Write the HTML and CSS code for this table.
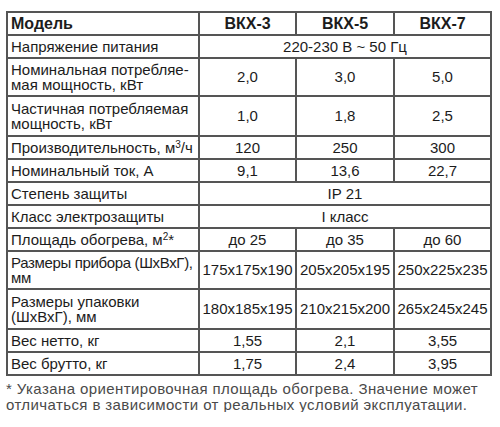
FILE: index.html
```html
<!DOCTYPE html>
<html lang="ru">
<head>
<meta charset="utf-8">
<link rel="stylesheet" href="styles.css">
</head>
<body>
<div class="page">
<table class="spec">
<colgroup>
<col class="c-name"><col class="c-val"><col class="c-val2"><col class="c-val">
</colgroup>
<tr class="r1 head"><th class="name">Модель</th><th>ВКХ-3</th><th>ВКХ-5</th><th>ВКХ-7</th></tr>
<tr class="r1"><td class="name">Напряжение питания</td><td colspan="3">220-230 В ~ 50 Гц</td></tr>
<tr class="r2"><td class="name">Номинальная потребляе-<br>мая мощность, кВт</td><td>2,0</td><td>3,0</td><td>5,0</td></tr>
<tr class="r2b"><td class="name">Частичная потребляемая<br>мощность, кВт</td><td>1,0</td><td>1,8</td><td>2,5</td></tr>
<tr class="r1"><td class="name">Производительность, м<sup>3</sup>/ч</td><td>120</td><td>250</td><td>300</td></tr>
<tr class="r1"><td class="name">Номинальный ток, А</td><td>9,1</td><td>13,6</td><td>22,7</td></tr>
<tr class="r1"><td class="name">Степень защиты</td><td colspan="3">IP 21</td></tr>
<tr class="r1"><td class="name">Класс электрозащиты</td><td colspan="3">I класс</td></tr>
<tr class="r1"><td class="name">Площадь обогрева, м<sup>2</sup>*</td><td>до 25</td><td>до 35</td><td>до 60</td></tr>
<tr class="r2"><td class="name tight">Размеры прибора (ШхВхГ),<br>мм</td><td>175х175х190</td><td>205х205х195</td><td>250х225х235</td></tr>
<tr class="r2b"><td class="name">Размеры упаковки<br>(ШхВхГ), мм</td><td>180х185х195</td><td>210х215х200</td><td>265х245х245</td></tr>
<tr class="r1"><td class="name">Вес нетто, кг</td><td>1,55</td><td>2,1</td><td>3,55</td></tr>
<tr class="r1"><td class="name">Вес брутто, кг</td><td>1,75</td><td>2,4</td><td>3,95</td></tr>
</table>
<p class="note">* Указана ориентировочная площадь обогрева. Значение может<br>отличаться в зависимости от реальных условий эксплуатации.</p>
</div>
</body>
</html>
```
FILE: styles.css
```css
html, body {
  margin: 0;
  padding: 0;
  background: #ffffff;
}
.page {
  padding: 11px 0 0 6px;
  font-family: "Liberation Sans", Arial, sans-serif;
  color: #1c1c1c;
}
.spec {
  border-collapse: collapse;
  table-layout: fixed;
  width: 486px;
  font-size: 15px;
  line-height: 15.5px;
}
.c-name { width: 192px; }
.c-val { width: 97px; }
.c-val2 { width: 98px; }
.spec th, .spec td {
  border: 2px solid #555555;
  padding: 0 2px;
  text-align: center;
  vertical-align: middle;
  white-space: nowrap;
}
.spec .name {
  text-align: left;
  padding-left: 3px;
  padding-right: 0;
}
.spec .tight {
  letter-spacing: -0.35px;
}
.spec th {
  font-weight: bold;
  font-size: 16px;
}
.r1 { height: 23px; }
.r2 { height: 38px; }
.r2b { height: 40px; }
sup {
  font-size: 10px;
  line-height: 0;
  vertical-align: 5px;
}
.note {
  margin: 5px 0 0 0;
  font-size: 15px;
  letter-spacing: 0.4px;
  line-height: 15.5px;
  color: #4a4a4a;
  white-space: nowrap;
}
```
